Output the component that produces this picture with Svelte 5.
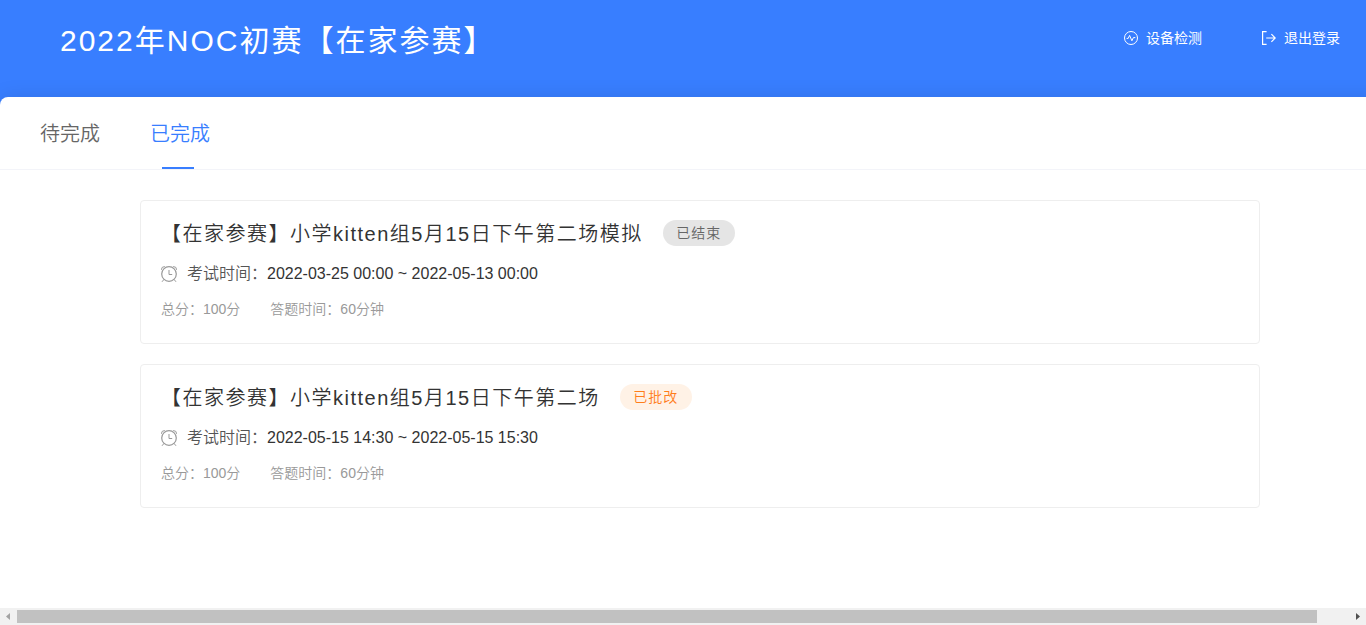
<script lang="ts">
  interface Exam {
    title: string;
    status: string;
    graded: boolean;
    time: string;
    score: string;
    duration: string;
  }

  const tabs = ['待完成', '已完成'];
  const contentWidth = 1400;
  const arrowSize = 17;

  const exams: Exam[] = [
    {
      title: '【在家参赛】小学kitten组5月15日下午第二场模拟',
      status: '已结束',
      graded: false,
      time: '2022-03-25 00:00 ~ 2022-05-13 00:00',
      score: '100分',
      duration: '60分钟'
    },
    {
      title: '【在家参赛】小学kitten组5月15日下午第二场',
      status: '已批改',
      graded: true,
      time: '2022-05-15 14:30 ~ 2022-05-15 15:30',
      score: '100分',
      duration: '60分钟'
    }
  ];

  let activeTab = $state(1);
  let scroller: HTMLDivElement;
  let viewWidth = $state(contentWidth);
  let scrollLeft = $state(0);

  let fullWidth = $derived(Math.max(contentWidth, viewWidth));
  let trackWidth = $derived(viewWidth - arrowSize * 2);
  let thumbWidth = $derived(Math.round((trackWidth * viewWidth) / fullWidth));
  let thumbOffset = $derived(Math.round((trackWidth * scrollLeft) / fullWidth));

  function scrollBy(amount: number) {
    scroller.scrollLeft += amount;
  }
</script>

<div class="page">
  <div
    class="scroller"
    bind:this={scroller}
    bind:clientWidth={viewWidth}
    onscroll={() => (scrollLeft = scroller.scrollLeft)}
  >
    <div class="content">
      <header>
        <h1>2022年NOC初赛【在家参赛】</h1>
        <nav>
          <a href="#check">
            <svg width="14" height="14" viewBox="0 0 14 14" fill="none" stroke="currentColor">
              <circle cx="7" cy="7" r="6.5" />
              <path d="M2.6 7.4H4.2L5.6 4.4L7.9 9.8L9.4 6.6H11.3" stroke-linejoin="round" />
            </svg>
            设备检测
          </a>
          <a href="#logout">
            <svg width="14" height="14" viewBox="0 0 14 14" fill="none" stroke="currentColor" stroke-width="1.2">
              <path d="M4.6 0.6H0.6V13.4H4.6" />
              <path d="M4.2 7H13M9.4 3.2L13.2 7L9.4 10.8" />
            </svg>
            退出登录
          </a>
        </nav>
      </header>

      <main>
        <div class="tabs" role="tablist">
          {#each tabs as tab, i}
            <button
              type="button"
              role="tab"
              class:active={activeTab === i}
              aria-selected={activeTab === i}
              onclick={() => (activeTab = i)}>{tab}</button>
          {/each}
        </div>

        <div class="list">
          {#each exams as exam}
            <article class="card">
              <div class="title-row">
                <h2>{exam.title}</h2>
                <span class="badge" class:graded={exam.graded}>{exam.status}</span>
              </div>
              <div class="time-row">
                <svg width="16" height="16" viewBox="0 0 16 16" fill="none" stroke="#999" aria-hidden="true">
                  <circle cx="8" cy="8" r="7.3" stroke-width="1.2" />
                  <path d="M8 4V8.5H11.2" />
                  <path d="M0.4 3.8Q0.2 0.6 3.8 0.5M12.2 0.5Q15.8 0.6 15.6 3.8" />
                  <path d="M3 13.4L1 15.8M13 13.4L15 15.8" />
                </svg>
                <span class="label">考试时间：</span>
                <span>{exam.time}</span>
              </div>
              <div class="meta-row">
                <span>总分：{exam.score}</span>
                <span>答题时间：{exam.duration}</span>
              </div>
            </article>
          {/each}
        </div>
      </main>
    </div>
  </div>

  <div class="scrollbar">
    <button type="button" aria-label="向左滚动" onclick={() => scrollBy(-40)}>
      <svg width="17" height="17" viewBox="0 0 17 17"><path d="M10 5V12L6 8.5Z" fill="#a3a3a3" /></svg>
    </button>
    <div class="track">
      <div class="thumb" style="width: {thumbWidth}px; margin-left: {thumbOffset}px"></div>
    </div>
    <button type="button" aria-label="向右滚动" onclick={() => scrollBy(40)}>
      <svg width="17" height="17" viewBox="0 0 17 17"><path d="M7 5V12L11 8.5Z" fill="#505050" /></svg>
    </button>
  </div>
</div>

<style>
  .page {
    display: flex;
    flex-direction: column;
    height: 100vh;
    font-family: 'Liberation Sans', 'Noto Sans CJK SC', sans-serif;
    color: #333;
  }

  .scroller {
    flex: 1;
    min-height: 0;
    overflow: auto;
    scrollbar-width: none;
  }

  .content {
    display: flex;
    flex-direction: column;
    min-width: 1400px;
    min-height: 100%;
    background: #387eff;
  }

  header {
    display: flex;
    justify-content: space-between;
    align-items: flex-start;
    padding: 19px 60px 34px;
    color: #fff;
  }

  h1 {
    margin: 0;
    font-size: 30px;
    font-weight: 400;
    line-height: 44px;
    letter-spacing: 2px;
  }

  nav {
    display: flex;
    gap: 60px;
  }

  nav a {
    display: flex;
    align-items: center;
    gap: 8px;
    font-size: 14px;
    line-height: 38px;
    color: #fff;
    text-decoration: none;
  }

  main {
    flex: 1;
    background: #fff;
    border-radius: 8px 8px 0 0;
    box-shadow: 0 0 20px rgba(0, 0, 0, 0.1);
  }

  .tabs {
    display: flex;
    gap: 50px;
    padding: 0 40px;
    border-bottom: 1px solid #f3f4f9;
  }

  .tabs button {
    position: relative;
    padding: 2px 0 0;
    border: none;
    background: none;
    font-family: inherit;
    font-size: 20px;
    font-weight: 350;
    line-height: 70px;
    color: #666;
    cursor: pointer;
  }

  .tabs button.active {
    color: #387eff;
  }

  .tabs button.active::after {
    content: '';
    position: absolute;
    left: 12px;
    bottom: 0;
    width: 32px;
    height: 2px;
    background: #387eff;
  }

  .list {
    display: flex;
    flex-direction: column;
    gap: 20px;
    width: 1120px;
    margin: 30px auto;
  }

  .card {
    padding: 18px 20px 24px;
    border: 1px solid #eee;
    border-radius: 4px;
  }

  .title-row {
    display: flex;
    align-items: center;
    gap: 20px;
  }

  h2 {
    margin: 0;
    padding-top: 2px;
    font-size: 20px;
    font-weight: 350;
    line-height: 26px;
    letter-spacing: 0.075em;
  }

  .badge {
    min-width: 72px;
    border-radius: 13px;
    background: #e5e5e5;
    color: #666;
    font-size: 14px;
    font-weight: 350;
    line-height: 26px;
    letter-spacing: 1px;
    text-align: center;
  }

  .badge.graded {
    background: #fff2e6;
    color: #ff7d1a;
  }

  .time-row {
    display: flex;
    align-items: center;
    margin-top: 15px;
    font-size: 16px;
    font-weight: 350;
    line-height: 24px;
  }

  .time-row svg {
    margin-right: 10px;
  }

  .label {
    color: #555;
  }

  .meta-row {
    display: flex;
    gap: 30px;
    margin-top: 13px;
    font-size: 14px;
    font-weight: 350;
    line-height: 20px;
    color: #999;
  }

  .scrollbar {
    display: flex;
    height: 17px;
    background: #f1f1f1;
  }

  .scrollbar button {
    display: flex;
    padding: 0;
    border: none;
    background: none;
  }

  .track {
    flex: 1;
    padding: 2px 0;
  }

  .thumb {
    height: 13px;
    background: #c1c1c1;
  }
</style>
